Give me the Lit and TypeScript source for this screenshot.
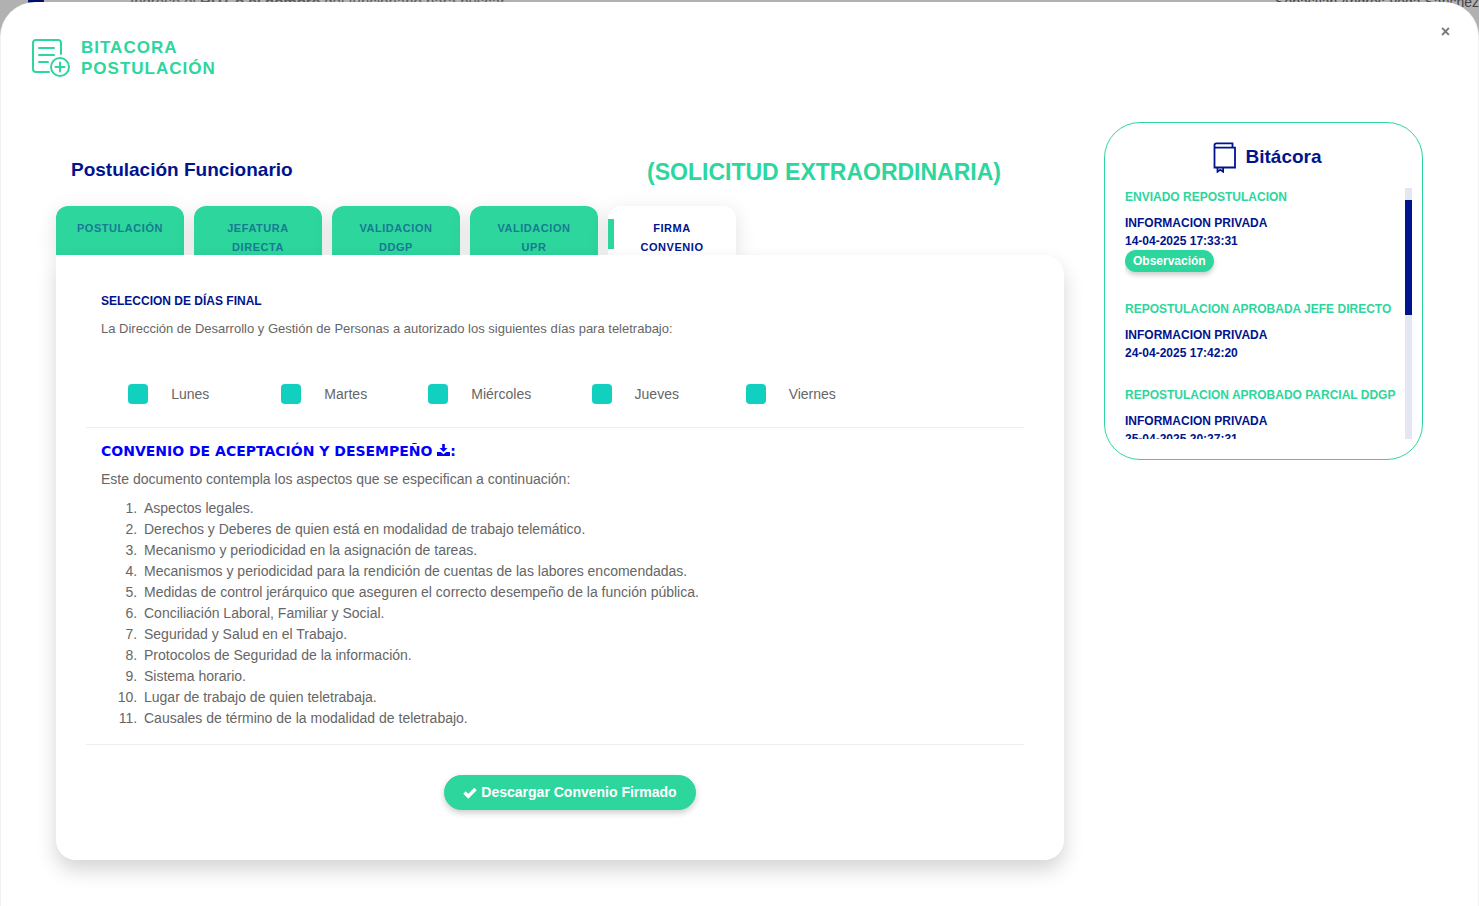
import { LitElement, html, css, nothing } from "lit";
import { customElement, state } from "lit/decorators.js";

interface LogEntry {
  title: string;
  date: string;
  note?: boolean;
}

const TABS = ["Postulación", "Jefatura Directa", "Validacion DDGP", "Validacion UPR", "Firma Convenio"];
const DAYS = ["Lunes", "Martes", "Miércoles", "Jueves", "Viernes"];
const TOPICS = [
  "Aspectos legales.",
  "Derechos y Deberes de quien está en modalidad de trabajo telemático.",
  "Mecanismo y periodicidad en la asignación de tareas.",
  "Mecanismos y periodicidad para la rendición de cuentas de las labores encomendadas.",
  "Medidas de control jerárquico que aseguren el correcto desempeño de la función pública.",
  "Conciliación Laboral, Familiar y Social.",
  "Seguridad y Salud en el Trabajo.",
  "Protocolos de Seguridad de la información.",
  "Sistema horario.",
  "Lugar de trabajo de quien teletrabaja.",
  "Causales de término de la modalidad de teletrabajo.",
];
const LOG: LogEntry[] = [
  { title: "ENVIADO REPOSTULACION", date: "14-04-2025 17:33:31", note: true },
  { title: "REPOSTULACION APROBADA JEFE DIRECTO", date: "24-04-2025 17:42:20" },
  { title: "REPOSTULACION APROBADO PARCIAL DDGP", date: "25-04-2025 20:27:31" },
];

@customElement("bitacora-log")
export class BitacoraLog extends LitElement {
  static styles = css`
    :host {
      display: block;
      box-sizing: border-box;
      border: 1px solid #2dd69c;
      border-radius: 36px;
      padding: 18px 10px 20px 20px;
      color: #00148e;
      font-weight: 700;
    }
    .title {
      display: flex;
      align-items: flex-start;
      justify-content: center;
      gap: 8px;
      margin: 0 2px 14px 0;
      font-size: 19px;
      line-height: 31px;
      height: 33px;
    }
    .body {
      display: flex;
      justify-content: space-between;
      height: 251px;
      font-size: 12px;
      line-height: 18px;
    }
    .list {
      flex: 1;
      min-width: 0;
      margin: 0;
      padding: 0;
      list-style: none;
      overflow: hidden;
      white-space: nowrap;
    }
    .entry {
      padding-bottom: 24px;
    }
    .entry-title {
      margin: 0 0 8px;
      font-size: 12px;
      color: #2dd69c;
    }
    .line {
      margin: 0;
    }
    .note {
      display: block;
      margin: 0 0 4px;
      border: 0;
      border-radius: 11px;
      padding: 0 8px;
      background: #2dd69c;
      color: #fff;
      font: inherit;
      line-height: 22px;
      box-shadow: 0 3px 5px rgba(0, 0, 0, 0.2);
    }
    .track {
      flex: none;
      width: 7px;
      padding-top: 12px;
      box-sizing: border-box;
      background: #e4e6f3;
    }
    .thumb {
      height: 115px;
      background: #00148e;
    }
  `;

  render() {
    return html`
      <h2 class="title">
        <svg width="24" height="32" viewBox="0 -1 24 32" fill="none" stroke="#00148e" stroke-width="1.8" aria-hidden="true">
          <path d="M1.500 2.500V25.500H22V5.700H1.500M1.500 3.500Q1.500 1.300 3.500 1.300H19.500V5.500" />
          <path d="M4.500 25.500V29.700L7.300 27.800L10.100 29.700V25.500" />
        </svg>
        Bitácora
      </h2>
      <div class="body">
        <ul class="list">
          ${LOG.map(
            (e) => html`<li class="entry">
              <h3 class="entry-title">${e.title}</h3>
              <p class="line">INFORMACION PRIVADA</p>
              <p class="line">${e.date}</p>
              ${e.note ? html`<button class="note" type="button">Observación</button>` : nothing}
            </li>`,
          )}
        </ul>
        <div class="track"><div class="thumb"></div></div>
      </div>
    `;
  }
}

@customElement("app-root")
export class AppRoot extends LitElement {
  static styles = css`
    :host {
      display: grid;
      min-height: 100vh;
      overflow: hidden;
      background: #b1b1b1;
      color: #666;
      font-family: "Liberation Sans", Arial, sans-serif;
      font-size: 14px;
      line-height: 21px;
    }
    .page,
    .modal {
      grid-area: 1 / 1;
      min-width: 0;
    }
    .page {
      display: flex;
      align-items: flex-end;
      justify-content: space-between;
      height: 10px;
      padding-left: 28px;
      font-size: 15px;
      line-height: 16px;
      color: #5c5c5c;
      white-space: nowrap;
    }
    .search {
      display: flex;
      align-items: flex-end;
    }
    .avatar {
      width: 16px;
      height: 16px;
      margin-right: 86px;
      border-radius: 50%;
      background: #000f66;
    }
    .user {
      color: #444;
      font-size: 14px;
    }
    .modal {
      margin-top: 2px;
      border: 1px solid #f1f1f1;
      border-width: 0 1px;
      border-radius: 35px 35px 0 0;
      background: #fff;
      z-index: 1;
    }
    .head {
      display: flex;
      align-items: flex-start;
      padding: 18px 25px 0 30px;
    }
    .brand {
      display: flex;
      gap: 10px;
      margin: 17px 0 0;
      color: #2dd69c;
      font-size: 17px;
      line-height: 21px;
      letter-spacing: 1px;
    }
    .close {
      margin-left: auto;
      border: 0;
      padding: 0 3px;
      background: none;
      color: #777;
      font: 700 16px/24px "Liberation Sans", Arial, sans-serif;
    }
    .content {
      display: grid;
      grid-template-columns: minmax(0, 1fr) 319px;
      gap: 40px;
      align-items: start;
      padding: 43px 55px 40px;
    }
    .titles {
      display: flex;
      align-items: flex-start;
      justify-content: space-between;
      padding: 33px 63px 19px 15px;
    }
    .title {
      margin: 0;
      color: #00148e;
      font-size: 19px;
      line-height: 30px;
    }
    .kind {
      margin: 0;
      padding-top: 2px;
      color: #2dd69c;
      font-size: 23px;
      line-height: 30px;
    }
    .tabs {
      display: flex;
      gap: 10px;
    }
    .tab {
      display: flex;
      align-items: flex-start;
      justify-content: center;
      width: 128px;
      height: 49px;
      box-sizing: border-box;
      border: 0;
      border-radius: 12px 12px 0 0;
      padding: 13px 20px 0;
      overflow: hidden;
      background: #2dd69c;
      color: #187a93;
      font: 700 11px/19px "Liberation Sans", Arial, sans-serif;
      letter-spacing: 0.05em;
      text-transform: uppercase;
      box-shadow: 0 5px 20px rgba(0, 0, 0, 0.13);
    }
    .tab.active {
      background: linear-gradient(#2dd69c, #2dd69c) 0 13px / 6px 30px no-repeat #fff;
      color: #00148e;
    }
    .panel {
      position: relative;
      border-radius: 0 20px 20px 20px;
      padding: 36px 40px 50px 30px;
      background: #fff;
      box-shadow: 0 10px 20px rgba(0, 0, 0, 0.17);
    }
    .section,
    .text {
      margin: 0;
      padding: 0 15px;
    }
    .section {
      color: #00148e;
      font-size: 12px;
      line-height: 20px;
    }
    .small {
      padding-top: 8px;
      font-size: 13px;
      line-height: 20px;
    }
    .days {
      display: grid;
      grid-template-columns: repeat(6, 1fr);
      padding: 45px 0 22px 5px;
    }
    .day {
      display: flex;
      align-items: flex-start;
      justify-content: center;
      gap: 23px;
    }
    .check {
      appearance: none;
      width: 20px;
      height: 20px;
      margin: 0;
      border-radius: 4px;
      background: #ddd;
    }
    .check:checked {
      background: #12d0bf;
    }
    .rule {
      margin: 0;
      border: 0;
      border-top: 1px solid #eee;
    }
    .agreement {
      margin: 13px 0 7px;
      padding: 0 15px;
      font-family: "Arial Black", "DejaVu Sans", sans-serif;
      font-size: 14px;
      line-height: 21px;
      font-weight: 900;
    }
    .download {
      color: #00f;
      text-decoration: none;
    }
    .topics {
      margin: 8px 0 15px;
      padding: 0 0 0 55px;
    }
    .topic {
      padding-left: 3px;
    }
    .actions {
      display: flex;
      justify-content: center;
      padding: 30px 0 0 30px;
    }
    .signed {
      display: flex;
      align-items: center;
      gap: 4px;
      border: 1px solid #2dd69c;
      border-radius: 18px;
      padding: 0 18px;
      background: #2dd69c;
      color: #fff;
      font: 700 14px/33px "Liberation Sans", Arial, sans-serif;
      box-shadow: 0 3px 6px rgba(0, 0, 0, 0.2);
    }
  `;

  @state() private active = 4;

  render() {
    return html`
      <div class="page">
        <div class="search">
          <span class="avatar"></span>
          <span>Ingrese el <b>RUT o el nombre</b> del funcionario para buscar</span>
        </div>
        <span class="user">Sebastián Andrés Vega Sánchez</span>
      </div>
      <main class="modal">
        <header class="head">
          <h1 class="brand">
            <svg width="40" height="42" viewBox="0 2 40 42" fill="none" stroke="#2dd69c" stroke-width="2" stroke-linecap="round" aria-hidden="true">
              <path d="M30 19V8Q30 5 27 5H5Q2 5 2 8V34Q2 37 5 37H18" />
              <path d="M8 13H23M8 20H23M8 27H17" />
              <circle cx="29" cy="32" r="9" />
              <path d="M29 27.500V36.500M24.500 32H33.500" />
            </svg>
            <span>BITACORA<br />POSTULACIÓN</span>
          </h1>
          <button class="close" type="button" aria-label="Cerrar">×</button>
        </header>
        <div class="content">
          <section>
            <div class="titles">
              <h2 class="title">Postulación Funcionario</h2>
              <h2 class="kind">(SOLICITUD EXTRAORDINARIA)</h2>
            </div>
            <div class="tabs" role="tablist">
              ${TABS.map(
                (t, i) => html`<button
                  class="tab ${i === this.active ? "active" : ""}"
                  type="button"
                  role="tab"
                  aria-selected=${i === this.active ? "true" : "false"}
                  @click=${() => (this.active = i)}
                >${t}</button>`,
              )}
            </div>
            <div class="panel" role="tabpanel">
              <h3 class="section">SELECCION DE DÍAS FINAL</h3>
              <p class="text small">La Dirección de Desarrollo y Gestión de Personas a autorizado los siguientes días para teletrabajo:</p>
              <div class="days">
                ${DAYS.map(
                  (d) => html`<label class="day"><input class="check" type="checkbox" checked />${d}</label>`,
                )}
              </div>
              <hr class="rule" />
              <h3 class="agreement">
                <a class="download" href="#">CONVENIO DE ACEPTACIÓN Y DESEMPEÑO
                  <svg width="13" height="12" viewBox="0 0 13 12" fill="#00f" aria-hidden="true">
                    <path d="M5.200 0H7.800V4H10.500L6.500 8L2.500 4H5.200Z" />
                    <path d="M0 8H3.800L6.500 10.300L9.200 8H13V12H0Z" />
                  </svg>:</a>
              </h3>
              <p class="text">Este documento contempla los aspectos que se especifican a continuación:</p>
              <ol class="topics">
                ${TOPICS.map((t) => html`<li class="topic">${t}</li>`)}
              </ol>
              <hr class="rule" />
              <div class="actions">
                <button class="signed" type="button">
                  <svg width="14" height="12" viewBox="0 0 14 12" fill="none" stroke="#fff" stroke-width="3.400" aria-hidden="true">
                    <path d="M1.500 5.500L5.300 9.300L12.500 2" />
                  </svg>
                  Descargar Convenio Firmado
                </button>
              </div>
            </div>
          </section>
          <bitacora-log></bitacora-log>
        </div>
      </main>
    `;
  }
}
